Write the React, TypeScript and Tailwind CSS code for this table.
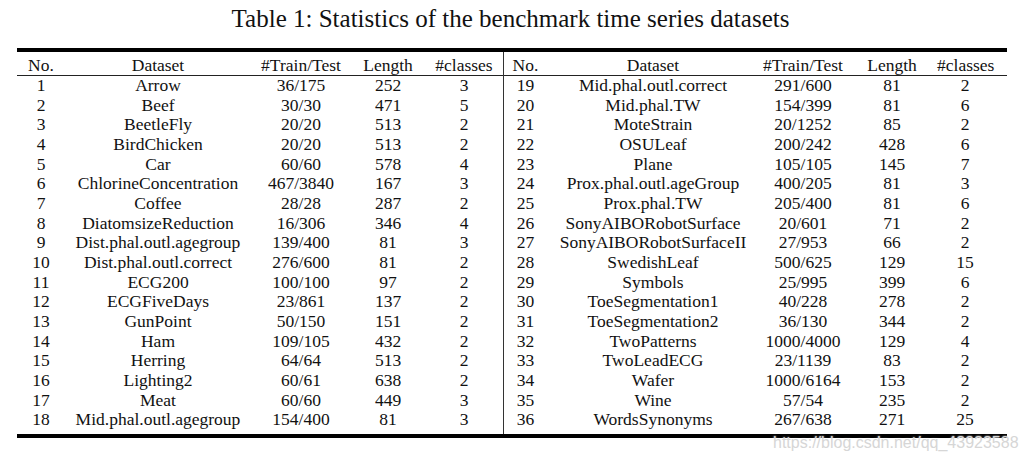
const LEFT: string[][] = [
  ["1", "Arrow", "36/175", "252", "3"],
  ["2", "Beef", "30/30", "471", "5"],
  ["3", "BeetleFly", "20/20", "513", "2"],
  ["4", "BirdChicken", "20/20", "513", "2"],
  ["5", "Car", "60/60", "578", "4"],
  ["6", "ChlorineConcentration", "467/3840", "167", "3"],
  ["7", "Coffee", "28/28", "287", "2"],
  ["8", "DiatomsizeReduction", "16/306", "346", "4"],
  ["9", "Dist.phal.outl.agegroup", "139/400", "81", "3"],
  ["10", "Dist.phal.outl.correct", "276/600", "81", "2"],
  ["11", "ECG200", "100/100", "97", "2"],
  ["12", "ECGFiveDays", "23/861", "137", "2"],
  ["13", "GunPoint", "50/150", "151", "2"],
  ["14", "Ham", "109/105", "432", "2"],
  ["15", "Herring", "64/64", "513", "2"],
  ["16", "Lighting2", "60/61", "638", "2"],
  ["17", "Meat", "60/60", "449", "3"],
  ["18", "Mid.phal.outl.agegroup", "154/400", "81", "3"],
];

const RIGHT: string[][] = [
  ["19", "Mid.phal.outl.correct", "291/600", "81", "2"],
  ["20", "Mid.phal.TW", "154/399", "81", "6"],
  ["21", "MoteStrain", "20/1252", "85", "2"],
  ["22", "OSULeaf", "200/242", "428", "6"],
  ["23", "Plane", "105/105", "145", "7"],
  ["24", "Prox.phal.outl.ageGroup", "400/205", "81", "3"],
  ["25", "Prox.phal.TW", "205/400", "81", "6"],
  ["26", "SonyAIBORobotSurface", "20/601", "71", "2"],
  ["27", "SonyAIBORobotSurfaceII", "27/953", "66", "2"],
  ["28", "SwedishLeaf", "500/625", "129", "15"],
  ["29", "Symbols", "25/995", "399", "6"],
  ["30", "ToeSegmentation1", "40/228", "278", "2"],
  ["31", "ToeSegmentation2", "36/130", "344", "2"],
  ["32", "TwoPatterns", "1000/4000", "129", "4"],
  ["33", "TwoLeadECG", "23/1139", "83", "2"],
  ["34", "Wafer", "1000/6164", "153", "2"],
  ["35", "Wine", "57/54", "235", "2"],
  ["36", "WordsSynonyms", "267/638", "271", "25"],
];

const HEAD = ["No.", "Dataset", "#Train/Test", "Length", "#classes"];

function Half({ rows, cols, className }: { rows: string[][]; cols: string; className?: string }) {
  return (
    <div className={className}>
      {/* header */}
      <div className={`grid ${cols} border-b border-[#222] pt-[3px] leading-[20px] h-[24px]`}>
        {HEAD.map((h) => (
          <div key={h} className="text-center whitespace-nowrap">
            {h}
          </div>
        ))}
      </div>
      {rows.map((r) => (
        <div key={r[0]} className={`grid ${cols} leading-[19.65px]`}>
          {r.map((c, i) => (
            <div key={i} className="text-center whitespace-nowrap">
              {c}
            </div>
          ))}
        </div>
      ))}
      <div className="h-[4px]" />
    </div>
  );
}

export default function App() {
  return (
    <div className="relative w-[1027px] h-[460px] bg-white text-[#111] overflow-hidden font-['Liberation_Serif','Times_New_Roman',serif]">
      <div className="pt-[5px] pr-[6px] leading-[28px] text-[25px] text-center">
        Table 1: Statistics of the benchmark time series datasets
      </div>

      <div className="ml-[17px] mt-[15px] w-[990px] border-t-4 border-b-4 border-black text-[17.5px]">
        <div className="flex">
          <Half rows={LEFT} cols="grid-cols-[48px_186px_100px_74px_78px]" className="w-[486px]" />
          <Half
            rows={RIGHT}
            cols="grid-cols-[43px_212px_88px_90px_56px]"
            className="w-[504px] border-l border-[#333]"
          />
        </div>
      </div>

      {/* watermark */}
      <div className="absolute left-[773px] top-[433px] text-[16px] leading-[20px] text-[#d6d6d6] font-['Liberation_Sans',Arial,sans-serif] [text-shadow:0_0_2px_#fff]">
        https://blog.csdn.net/qq_43923588
      </div>
    </div>
  );
}
